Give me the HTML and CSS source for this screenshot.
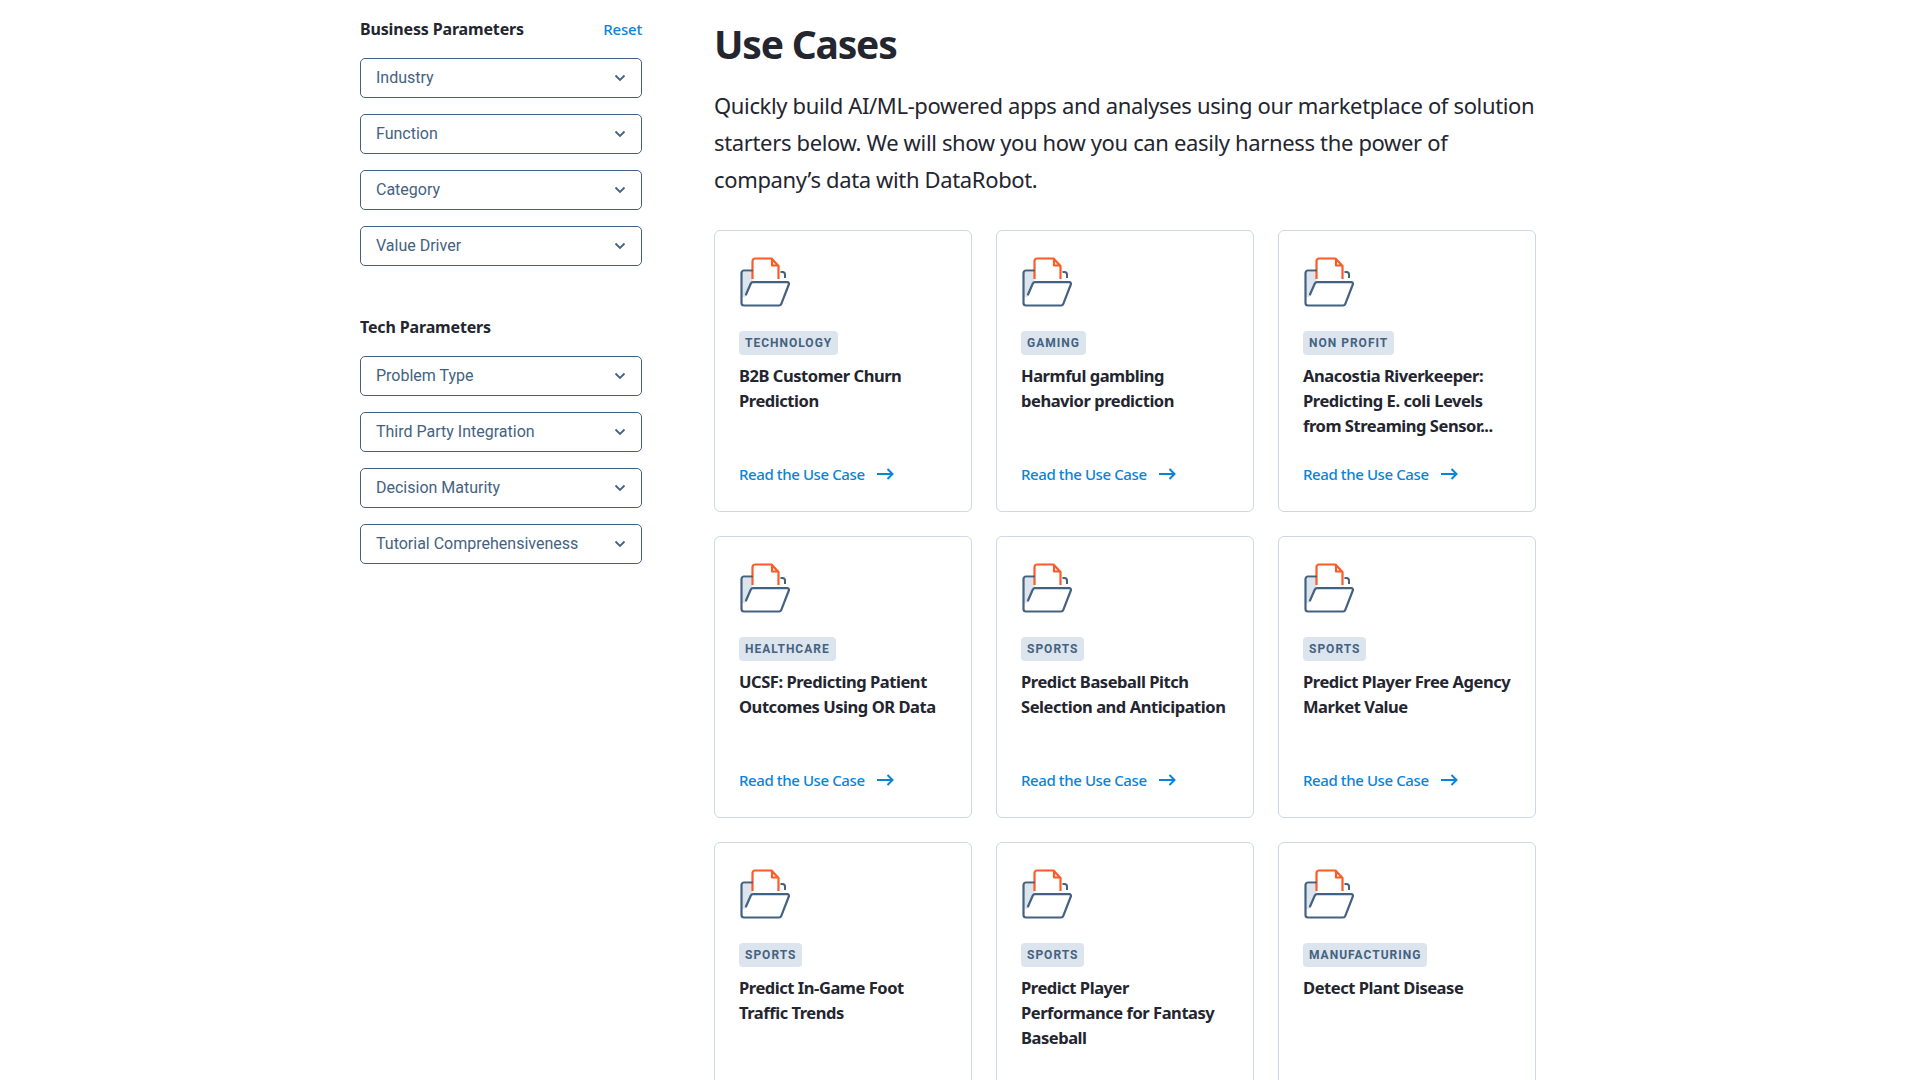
FILE: index.html
```html
<!DOCTYPE html>
<html lang="en">
<head>
    <meta charset="UTF-8">
    <meta name="viewport" content="width=device-width, initial-scale=1.0">
    <title>Use Cases</title>
    <link rel="stylesheet" href="styles.css">
</head>
<body>
    <svg class="sprites" width="0" height="0">
        <symbol id="folder" viewBox="0 0 50 50">
            <path d="M2 15 H12.5 V25 L5 40 H2 Z" fill="#dce5ee"/>
            <path d="M12.5 22 V4 a2.5 2.5 0 0 1 2.5 -2.5 H31.5 L38.5 9 V22 M32 2 V8.5 H38.5" fill="none" stroke="#fc5a26" stroke-width="2.2" stroke-linejoin="round"/>
            <path d="M32 3 V8.5 H37.5" fill="none" stroke="#fc5a26" stroke-width="1"/>
            <path d="M12 13.5 H4 a2.5 2.5 0 0 0 -2.5 2.5 V46 a2.5 2.5 0 0 0 2.5 2.5 H39 a2.5 2.5 0 0 0 2.3 -1.6 L48.8 27.5 a1.6 1.6 0 0 0 -1.5 -2.3 H13 a2.5 2.5 0 0 0 -2.3 1.5 L6 37.5" fill="none" stroke="#44627f" stroke-width="2.2" stroke-linecap="round" stroke-linejoin="round"/>
            <path d="M40.5 15 H42.5 a2.5 2.5 0 0 1 2.5 2.5 V21" fill="none" stroke="#44627f" stroke-width="2"/>
        </symbol>
        <symbol id="chevron" viewBox="0 0 12 8">
            <path d="M1.5 1.5 L6 6 L10.5 1.5" fill="none" stroke="#44627f" stroke-width="1.8"/>
        </symbol>
        <symbol id="arrow" viewBox="0 0 17 12">
            <path d="M0 6 H15.5 M10.5 1 L15.5 6 L10.5 11" fill="none" stroke="#0a84d6" stroke-width="2"/>
        </symbol>
    </svg>

    <div class="container">
        <aside class="filters">
            <div class="filter-head">
                <h3>Business Parameters</h3>
                <a class="reset" href="#">Reset</a>
            </div>
            <div class="select">Industry <svg class="chev"><use href="#chevron"/></svg></div>
            <div class="select">Function <svg class="chev"><use href="#chevron"/></svg></div>
            <div class="select">Category <svg class="chev"><use href="#chevron"/></svg></div>
            <div class="select">Value Driver <svg class="chev"><use href="#chevron"/></svg></div>

            <div class="filter-head second">
                <h3>Tech Parameters</h3>
            </div>
            <div class="select">Problem Type <svg class="chev"><use href="#chevron"/></svg></div>
            <div class="select">Third Party Integration <svg class="chev"><use href="#chevron"/></svg></div>
            <div class="select">Decision Maturity <svg class="chev"><use href="#chevron"/></svg></div>
            <div class="select">Tutorial Comprehensiveness <svg class="chev"><use href="#chevron"/></svg></div>
        </aside>

        <main class="content">
            <h1>Use Cases</h1>
            <p class="intro">Quickly build AI/ML-powered apps and analyses using our marketplace of solution starters below. We will show you how you can easily harness the power of company’s data with DataRobot.</p>

            <div class="cards">
                <div class="card">
                    <svg class="icon"><use href="#folder"/></svg>
                    <div><span class="tag">Technology</span></div>
                    <div class="title">B2B Customer Churn Prediction</div>
                    <a class="read" href="#">Read the Use Case <svg class="arrow"><use href="#arrow"/></svg></a>
                </div>
                <div class="card">
                    <svg class="icon"><use href="#folder"/></svg>
                    <div><span class="tag">Gaming</span></div>
                    <div class="title">Harmful gambling behavior prediction</div>
                    <a class="read" href="#">Read the Use Case <svg class="arrow"><use href="#arrow"/></svg></a>
                </div>
                <div class="card">
                    <svg class="icon"><use href="#folder"/></svg>
                    <div><span class="tag">Non Profit</span></div>
                    <div class="title">Anacostia Riverkeeper: Predicting E. coli Levels from Streaming Sensor...</div>
                    <a class="read" href="#">Read the Use Case <svg class="arrow"><use href="#arrow"/></svg></a>
                </div>
                <div class="card">
                    <svg class="icon"><use href="#folder"/></svg>
                    <div><span class="tag">Healthcare</span></div>
                    <div class="title">UCSF: Predicting Patient Outcomes Using OR Data</div>
                    <a class="read" href="#">Read the Use Case <svg class="arrow"><use href="#arrow"/></svg></a>
                </div>
                <div class="card">
                    <svg class="icon"><use href="#folder"/></svg>
                    <div><span class="tag">Sports</span></div>
                    <div class="title">Predict Baseball Pitch Selection and Anticipation</div>
                    <a class="read" href="#">Read the Use Case <svg class="arrow"><use href="#arrow"/></svg></a>
                </div>
                <div class="card">
                    <svg class="icon"><use href="#folder"/></svg>
                    <div><span class="tag">Sports</span></div>
                    <div class="title nowrap">Predict Player Free Agency<br>Market Value</div>
                    <a class="read" href="#">Read the Use Case <svg class="arrow"><use href="#arrow"/></svg></a>
                </div>
                <div class="card">
                    <svg class="icon"><use href="#folder"/></svg>
                    <div><span class="tag">Sports</span></div>
                    <div class="title">Predict In-Game Foot Traffic Trends</div>
                </div>
                <div class="card">
                    <svg class="icon"><use href="#folder"/></svg>
                    <div><span class="tag">Sports</span></div>
                    <div class="title">Predict Player Performance for Fantasy Baseball</div>
                </div>
                <div class="card">
                    <svg class="icon"><use href="#folder"/></svg>
                    <div><span class="tag">Manufacturing</span></div>
                    <div class="title">Detect Plant Disease</div>
                </div>
            </div>
        </main>
    </div>
</body>
</html>
```
FILE: styles.css
```css
html, body {
    height: 1080px;
    overflow: hidden;
}

body {
    font-family: 'Noto Sans', sans-serif;
    background-color: #fff;
    color: #23252f;
    margin: 0;
    padding: 0;
}

.sprites {
    position: absolute;
}

.container {
    display: flex;
    gap: 72px;
    width: 1176px;
    margin-left: 360px;
}

.filters {
    width: 282px;
    flex-shrink: 0;
    padding-top: 18px;
}

.filter-head {
    display: flex;
    justify-content: space-between;
    align-items: center;
    height: 22px;
    margin-bottom: 18px;
}

.filter-head.second {
    margin-top: 50px;
    margin-bottom: 18px;
}

.filter-head h3 {
    margin: 0;
    font-size: 16px;
    font-weight: 700;
    letter-spacing: -0.15px;
}

.reset {
    color: #0a84d6;
    font-size: 15px;
    font-weight: 500;
    text-decoration: none;
    letter-spacing: -0.2px;
}

.select {
    display: flex;
    justify-content: space-between;
    align-items: center;
    box-sizing: border-box;
    height: 40px;
    margin-bottom: 16px;
    padding: 0 15px 1px;
    border: 1px solid #44627f;
    border-radius: 5px;
    font-family: 'Roboto', sans-serif;
    font-size: 16px;
    color: #44627f;
}

.chev {
    width: 12px;
    height: 8px;
}

.content {
    width: 822px;
    padding-top: 20px;
}

h1 {
    margin: 0 0 19px;
    font-size: 39px;
    line-height: 48px;
    font-weight: 700;
    letter-spacing: -1.2px;
}

.intro {
    margin: 0 0 33px;
    font-size: 22px;
    line-height: 36.8px;
    letter-spacing: -0.35px;
}

.cards {
    display: grid;
    grid-template-columns: repeat(3, 258px);
    grid-auto-rows: 282px;
    gap: 24px;
}

.card {
    display: flex;
    flex-direction: column;
    box-sizing: border-box;
    padding: 24px;
    border: 1px solid #cdd8e3;
    border-radius: 6px;
}

.icon {
    display: block;
    width: 50px;
    height: 50px;
    margin: 2px 0 23px 1px;
}

.tag {
    display: inline-block;
    height: 24px;
    line-height: 24px;
    padding: 0 6px;
    border-radius: 4px;
    background-color: #dce5ee;
    color: #44627f;
    font-family: 'Roboto', sans-serif;
    font-size: 12px;
    font-weight: 700;
    letter-spacing: 1px;
    text-transform: uppercase;
}

.title {
    margin-top: 8px;
    font-size: 16.5px;
    line-height: 25px;
    font-weight: 700;
    letter-spacing: -0.45px;
}

.nowrap {
    white-space: nowrap;
}

.read {
    display: flex;
    align-items: center;
    gap: 12px;
    margin-top: auto;
    margin-bottom: 3px;
    color: #0a84d6;
    font-size: 15px;
    font-weight: 500;
    letter-spacing: -0.4px;
    text-decoration: none;
}

.arrow {
    width: 17px;
    height: 12px;
}
```
